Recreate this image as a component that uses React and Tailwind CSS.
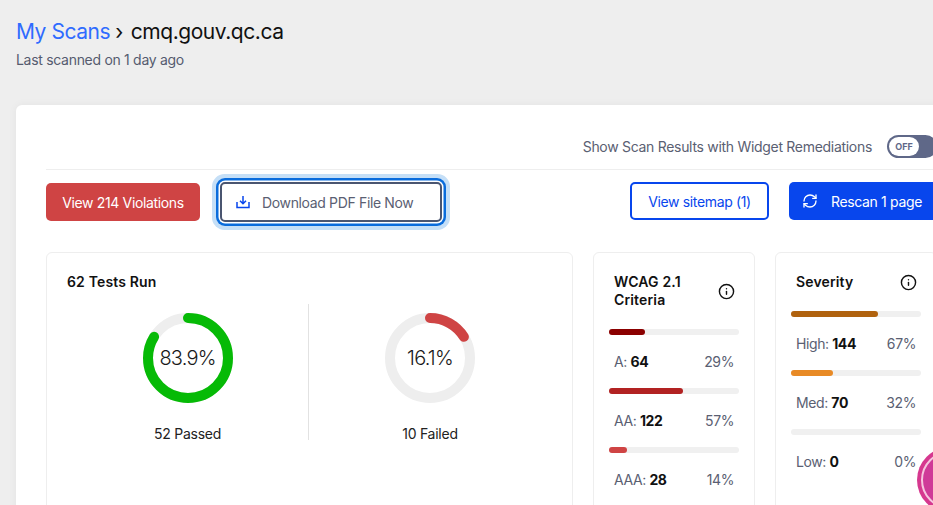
import React from 'react';
import { Info, RefreshCw } from 'lucide-react';

const Donut = ({ percent, color, value, label, className }) => (
    <div className={`flex flex-col items-center pt-[9px] ${className}`}>
        <div className="relative h-[90px] w-[90px]">
            <svg viewBox="0 0 90 90" className="h-full w-full -rotate-90">
                <circle cx="45" cy="45" r="40" fill="none" stroke="#eeeeee" strokeWidth="10" />
                <circle
                    cx="45"
                    cy="45"
                    r="40"
                    fill="none"
                    stroke={color}
                    strokeWidth="10"
                    strokeLinecap="round"
                    pathLength="100"
                    strokeDasharray={`${percent} 100`}
                />
            </svg>
            <div className="absolute inset-0 flex items-center justify-center text-[20px] font-light tracking-[-0.8px] text-[#1a1a1a]">
                {value}
            </div>
        </div>
        <div className="mt-[21px] text-[14px] leading-[20px] tracking-[-0.25px] text-[#222222]">{label}</div>
    </div>
);

const Meter = ({ fill, color, label, count, percent }) => (
    <div className="mb-[18px]">
        <div className="h-[6px] w-[130px] rounded-full bg-[#f0f0f0]">
            <div className="h-full rounded-full" style={{ width: `${fill}%`, backgroundColor: color }} />
        </div>
        <div className="mt-[17px] flex h-[18px] w-[125px] items-center justify-between pl-[5px] text-[14px] tracking-[-0.4px] text-[#5a6072]">
            <span>
                {label}: <b className="font-bold text-[#111111]">{count}</b>
            </span>
            <span>{percent}</span>
        </div>
    </div>
);

const DownloadIcon = () => (
    <svg viewBox="0 0 14 14" className="h-[14px] w-[14px]" fill="none" stroke="#0846ed" strokeWidth="1.5">
        <path d="M7 1v7.5M4 5.8L7 8.8l3-3" />
        <path d="M1 7v5.6h12V7" />
    </svg>
);

export default function App() {
    return (
        <div
            className="relative h-[505px] w-[933px] overflow-hidden bg-[#eeeeee]"
            style={{ fontFamily: 'Inter, sans-serif' }}
        >
            {/* Header */}
            <div className="px-4 pt-[19px]">
                <h1 className="flex h-[26px] items-center text-[21px] tracking-[-0.45px] text-[#111111]">
                    <span className="text-[#2f6bff]">My Scans</span>
                    <span className="ml-[5px] mr-[8px]">›</span>
                    <span>cmq.gouv.qc.ca</span>
                </h1>
                <p className="mt-[5px] text-[14px] leading-[20px] tracking-[-0.3px] text-[#555b6e]">Last scanned on 1 day ago</p>
            </div>

            {/* Main panel */}
            <div className="ml-4 mt-[35px] h-[420px] w-[951px] rounded-t-md bg-white px-[30px] pt-[30px] shadow-[0_0_8px_rgba(0,0,0,0.05)]">
                <div className="flex h-[35px] items-center justify-end gap-[15px] border-b border-[#eeeeee] pb-[12px] pt-[1px]">
                    <span className="text-[14px] tracking-[-0.3px] text-[#5a6072]">Show Scan Results with Widget Remediations</span>
                    <div className="flex h-[23px] w-[50px] items-center rounded-full bg-[#5f6888] pl-[2px]">
                        <div className="flex h-[19px] w-[30px] items-center justify-center rounded-full bg-white text-[9px] font-bold text-[#5f6888]">
                            OFF
                        </div>
                    </div>
                </div>

                <div className="mt-[12px] flex items-start text-[14px] tracking-[-0.35px]">
                    <button className="mt-px h-[38px] w-[154px] rounded-[5px] bg-[#cf4444] text-white">
                        View 214 Violations
                    </button>
                    <button className="ml-[20px] flex h-[40px] w-[222px] items-center gap-[12px] rounded-[5px] border-2 border-[#4a5570] bg-white pl-[14px] text-[#5a6072] shadow-[0_0_0_1.5px_#ffffff,0_0_0_4px_#0a6cdc,0_0_0_8px_#c5dff7]">
                        <DownloadIcon />
                        Download PDF File Now
                    </button>
                    <button className="ml-auto h-[38px] w-[139px] rounded-[5px] border-2 border-[#0846ed] bg-white text-[#0846ed]">
                        View sitemap (1)
                    </button>
                    <button className="ml-[20px] flex h-[38px] w-[148px] items-center gap-[13px] rounded-[5px] bg-[#0846ed] pl-[13px] text-white">
                        <RefreshCw size={16} />
                        Rescan 1 page
                    </button>
                </div>

                {/* Stat cards */}
                <div className="mt-[30px] flex gap-[20px]">
                    <section className="h-[300px] w-[527px] rounded-md border border-[#eeeeee] px-[20px] pt-[20px]">
                        <h2 className="text-[14px] font-semibold leading-[18px] tracking-[0.15px] text-[#111111]">62 Tests Run</h2>
                        <div className="relative mt-[13px] flex">
                            <Donut className="w-[241px]" percent={83.9} color="#06ba06" value="83.9%" label="52 Passed" />
                            <div className="h-[136px] w-px bg-[#e2e2e2]" />
                            <Donut className="w-[242px]" percent={16.1} color="#cf4444" value="16.1%" label="10 Failed" />
                        </div>
                    </section>

                    <section className="h-[300px] w-[162px] rounded-md border border-[#eeeeee] pl-[15px] pt-[20px]">
                        <div className="flex w-[130px] items-center justify-between pl-[5px]">
                            <h2 className="text-[14px] font-semibold leading-[18px] tracking-[0.15px] text-[#111111]">
                                WCAG 2.1
                                <br />
                                Criteria
                            </h2>
                            <Info size={17} className="mr-[4px] text-[#111111]" />
                        </div>
                        <div className="mt-[20px]">
                            <Meter fill={28} color="#8b0000" label="A" count="64" percent="29%" />
                            <Meter fill={57} color="#b22222" label="AA" count="122" percent="57%" />
                            <Meter fill={14} color="#cf4444" label="AAA" count="28" percent="14%" />
                        </div>
                    </section>

                    <section className="h-[300px] w-[162px] rounded-md border border-[#eeeeee] pl-[15px] pt-[20px]">
                        <div className="flex w-[130px] items-center justify-between pl-[5px]">
                            <h2 className="text-[14px] font-semibold leading-[18px] tracking-[0.15px] text-[#111111]">Severity</h2>
                            <Info size={17} className="mr-[4px] text-[#111111]" />
                        </div>
                        <div className="mt-[20px]">
                            <Meter fill={67} color="#b0620e" label="High" count="144" percent="67%" />
                            <Meter fill={32} color="#e88a26" label="Med" count="70" percent="32%" />
                            <Meter fill={0} color="#e88a26" label="Low" count="0" percent="0%" />
                        </div>
                    </section>
                </div>
            </div>

            {/* Floating widget */}
            <div className="absolute left-[917px] top-[447px] h-[66px] w-[66px] rounded-full bg-[#d6388f] p-[4px]">
                <div className="h-full w-full rounded-full border-[2px] border-[#f6c6df] bg-[#cf3a98]" />
            </div>
        </div>
    );
}
